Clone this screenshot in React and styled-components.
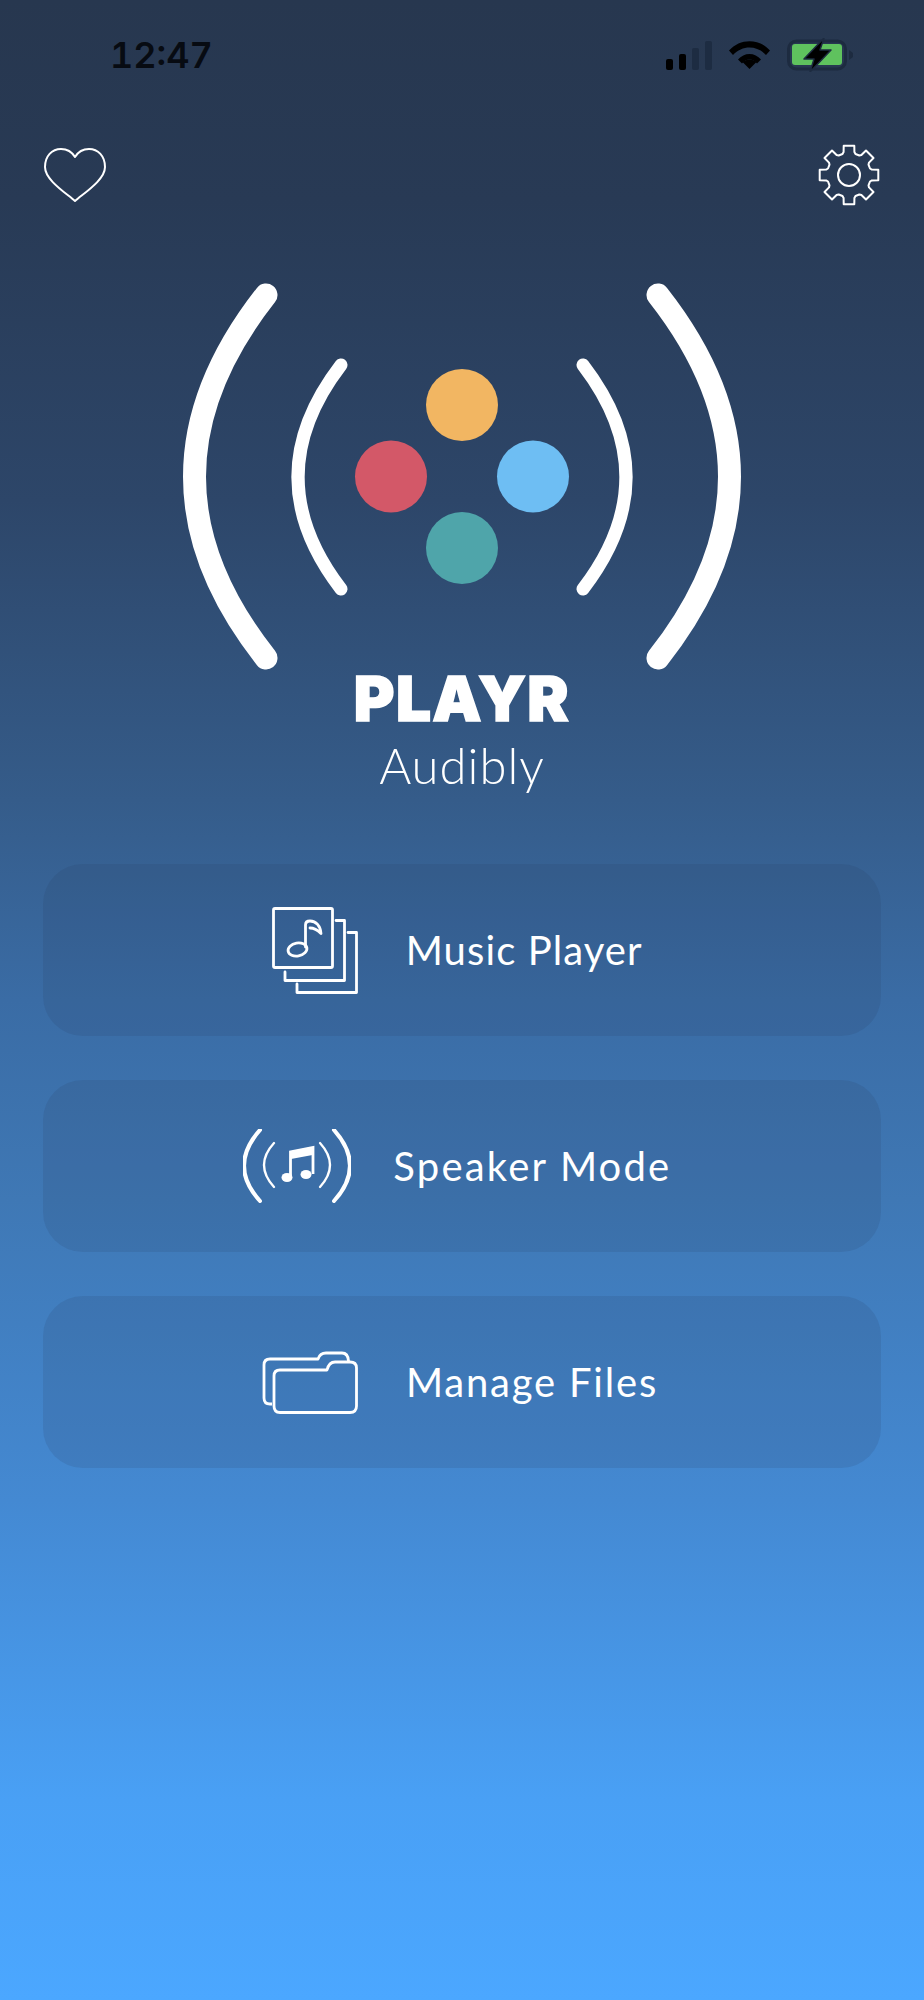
import React from 'react'
import styled, { createGlobalStyle } from 'styled-components'

const GlobalStyle = createGlobalStyle`
  html, body {
    margin: 0;
    padding: 0;
  }
`

// builds the outline of the settings cog, 8 teeth
const cogPath = (() => {
  const cx = 31, cy = 31
  const pts = []
  for (let i = 0; i < 8; i++) {
    const a = (i * Math.PI) / 4 - Math.PI / 2
    const at = (r, d) => [cx + r * Math.cos(a + d), cy + r * Math.sin(a + d)]
    pts.push(at(22, -0.3), at(23.5, -0.23), at(29.8, -0.18), at(29.8, 0.18), at(23.5, 0.23), at(22, 0.3))
  }
  return 'M' + pts.map(p => p[0].toFixed(1) + ' ' + p[1].toFixed(1)).join('L') + 'Z'
})()

const menuItems = [
  { label: 'Music Player', icon: <AlbumsIcon />, gap: 47.5, shift: 9, tracking: 1.1 },
  { label: 'Speaker Mode', icon: <SpeakerIcon />, gap: 42.8, shift: 10, tracking: 2.2 },
  { label: 'Manage Files', icon: <FilesIcon />, gap: 47.5, shift: 3.5, tracking: 1.8 },
]

function SignalIcon() {
  return (
    <svg width="46" height="29" viewBox="0 0 46 29">
      <rect x="0" y="18" width="7" height="11" rx="2" fill="#000" />
      <rect x="13" y="13" width="7" height="16" rx="2" fill="#000" />
      <rect x="26" y="7" width="7" height="22" rx="2" fill="#1d2c42" />
      <rect x="39" y="0" width="7" height="29" rx="2" fill="#1d2c42" />
    </svg>
  )
}

function WifiIcon() {
  return (
    <svg width="41" height="28" viewBox="0 0 41 28">
      <path d="M0 9.500C11-3 30-3 41 9.500L37 14C28 4 13 4 4 14Z" fill="#000" />
      <path d="M9 18.500C15 11 26 11 32 18.500L28 22.500C24 17 17 17 13 22.500Z" fill="#000" />
      <path d="M20.500 28L13.500 21C17 17.500 24 17.500 27.500 21Z" fill="#000" />
    </svg>
  )
}

function BatteryIcon() {
  return (
    <svg width="66" height="34" viewBox="0 0 66 34">
      <rect x="1.500" y="3" width="57" height="28" rx="8" fill="none" stroke="#1d2b40" strokeWidth="3" />
      <rect x="5" y="6" width="50" height="21" rx="3" fill="#5fc25e" />
      <path d="M62 12L66 15V19L62 22Z" fill="#1d2b40" />
      <path d="M37 0L17 21H27L23 34L44 12H33Z" fill="#000" stroke="#1d2b40" strokeWidth="1.500" strokeLinejoin="round" />
    </svg>
  )
}

function HeartIcon() {
  return (
    <svg width="62" height="56" viewBox="0 0 62 56">
      <path
        d="M31 54C22 46 1 33 1 20C1 9 8 2 17 2C23 2 28 5 31 10C34 5 39 2 45 2C54 2 61 9 61 20C61 33 40 46 31 54Z"
        fill="none"
        stroke="#fff"
        strokeWidth="2"
        strokeLinejoin="round"
      />
    </svg>
  )
}

function CogIcon() {
  return (
    <svg width="62" height="62" viewBox="0 0 62 62">
      <path d={cogPath} fill="none" stroke="#fff" strokeWidth="2" strokeLinejoin="round" />
      <circle cx="31" cy="31" r="11" fill="none" stroke="#fff" strokeWidth="2" />
    </svg>
  )
}

function LogoMark() {
  return (
    <svg width="924" height="395" viewBox="0 275 924 395">
      <g fill="none" stroke="#fff" strokeLinecap="round">
        <path d="M266 295Q123 477 266 658" strokeWidth="23" />
        <path d="M658 295Q801 477 658 658" strokeWidth="23" />
        <path d="M341 365Q255 477 341 589" strokeWidth="13" />
        <path d="M583 365Q669 477 583 589" strokeWidth="13" />
      </g>
      <circle cx="462" cy="405" r="36" fill="#f2b662" />
      <circle cx="391" cy="476.500" r="36" fill="#d35868" />
      <circle cx="533" cy="476.500" r="36" fill="#6ebef3" />
      <circle cx="462" cy="548" r="36" fill="#4fa5aa" />
    </svg>
  )
}

function AlbumsIcon() {
  return (
    <svg width="86" height="87" viewBox="0 0 86 87" fill="none" stroke="#fff" strokeWidth="2.800" strokeLinejoin="round" strokeLinecap="round">
      <rect x="1.500" y="1.500" width="59" height="59" rx="1.500" />
      <path d="M64 13.500H72.500V73.500H13V65" />
      <path d="M76 25.500H84.500V85.500H25V77" />
      <ellipse cx="25.500" cy="42.500" rx="9.500" ry="6.500" transform="rotate(-10 25.500 42.500)" />
      <path d="M33.500 40V18Q33.500 14 38 14C44 14 48.500 19 49 26.500C45 22.500 41 21 38 21" />
    </svg>
  )
}

function SpeakerIcon() {
  return (
    <svg width="108" height="74" viewBox="242 1130 108 74" fill="none" stroke="#fff" strokeLinecap="round">
      <path d="M259 1131Q227 1167 259 1202" strokeWidth="4" />
      <path d="M333 1131Q365 1167 333 1202" strokeWidth="4" />
      <path d="M273 1144Q253 1166 273 1188" strokeWidth="2.300" />
      <path d="M319 1144Q339 1166 319 1188" strokeWidth="2.300" />
      <ellipse cx="286" cy="1178.500" rx="5.500" ry="4.500" fill="#fff" stroke="none" />
      <ellipse cx="305" cy="1175.500" rx="5.500" ry="4.500" fill="#fff" stroke="none" />
      <path d="M289.500 1178V1153L312 1148.500V1175" strokeWidth="2.800" strokeLinecap="butt" />
      <path d="M290 1153L311.500 1149V1156L290 1160Z" fill="#fff" stroke="none" />
    </svg>
  )
}

function FilesIcon() {
  return (
    <svg width="96" height="63" viewBox="262 1348 96 63" fill="none" stroke="#fff" strokeWidth="2.800" strokeLinejoin="round">
      <path d="M272 1401H270Q264 1401 264 1395V1362Q264 1356 270 1356H318Q320 1350 326 1350H342Q348 1350 348.500 1358" />
      <path d="M274 1373Q274 1367 280 1367H327Q329 1359 335 1359H350Q356.500 1359 356.500 1365V1403Q356.500 1409.500 350 1409.500H280Q274 1409.500 274 1403Z" />
    </svg>
  )
}

export default function App() {
  return (
    <Page>
      <GlobalStyle />
      <StatusBar>
        <Clock>12:47</Clock>
        <StatusIcons>
          <SignalIcon />
          <WifiIcon />
          <BatteryIcon />
        </StatusIcons>
      </StatusBar>
      <TopBar>
        <HeartIcon />
        <CogIcon />
      </TopBar>
      <Logo>
        <LogoMark />
      </Logo>
      <Title>PLAYR</Title>
      <Subtitle>Audibly</Subtitle>
      <Menu>
        {menuItems.map(item => (
          <MenuCard key={item.label} $gap={item.gap} $shift={item.shift}>
            {item.icon}
            <MenuLabel $tracking={item.tracking}>{item.label}</MenuLabel>
          </MenuCard>
        ))}
      </Menu>
    </Page>
  )
}

const Page = styled.div`
  width: 924px;
  height: 2000px;
  overflow: hidden;
  background: linear-gradient(
    180deg,
    #27374f 0%,
    #283a55 10%,
    #2d4669 25%,
    #355c8a 40%,
    #3a6ca5 50%,
    #3f78b5 60%,
    #4489d2 75%,
    #49a0f5 90%,
    #4ba7ff 100%
  );
  font-family: 'Lato', 'Liberation Sans', sans-serif;
  color: #fff;
`

const StatusBar = styled.div`
  display: flex;
  justify-content: space-between;
  align-items: center;
  height: 34px;
  padding: 38px 71px 0 110px;
`

const Clock = styled.div`
  font-family: 'Inter', 'Liberation Sans', sans-serif;
  font-size: 36px;
  font-weight: 600;
  font-variant-numeric: tabular-nums;
  color: #070b12;
`

const StatusIcons = styled.div`
  display: flex;
  align-items: center;
  gap: 17px;
`

const TopBar = styled.div`
  display: flex;
  justify-content: space-between;
  align-items: center;
  height: 62px;
  margin-top: 72px;
  padding: 0 44px;
`

const Logo = styled.div`
  display: flex;
  margin-top: 69px;
`

const Title = styled.h1`
  margin: 0;
  font-family: 'Inter', 'Liberation Sans', sans-serif;
  font-size: 62px;
  font-weight: 900;
  line-height: 58px;
  letter-spacing: 1.4px;
  text-align: center;
  -webkit-text-stroke: 1.5px #fff;
`

const Subtitle = styled.div`
  margin-top: 9px;
  font-size: 49px;
  font-weight: 300;
  letter-spacing: 1px;
  line-height: 56px;
  text-align: center;
`

const Menu = styled.div`
  display: flex;
  flex-direction: column;
  gap: 44px;
  margin-top: 71px;
  padding: 0 43px;
`

const MenuCard = styled.div`
  display: flex;
  align-items: center;
  justify-content: center;
  height: 172px;
  gap: ${props => props.$gap}px;
  padding-right: ${props => props.$shift}px;
  border-radius: 40px;
  background: rgba(38, 56, 84, 0.13);
`

const MenuLabel = styled.div`
  font-size: 40px;
  font-weight: 400;
  letter-spacing: ${props => props.$tracking}px;
`
